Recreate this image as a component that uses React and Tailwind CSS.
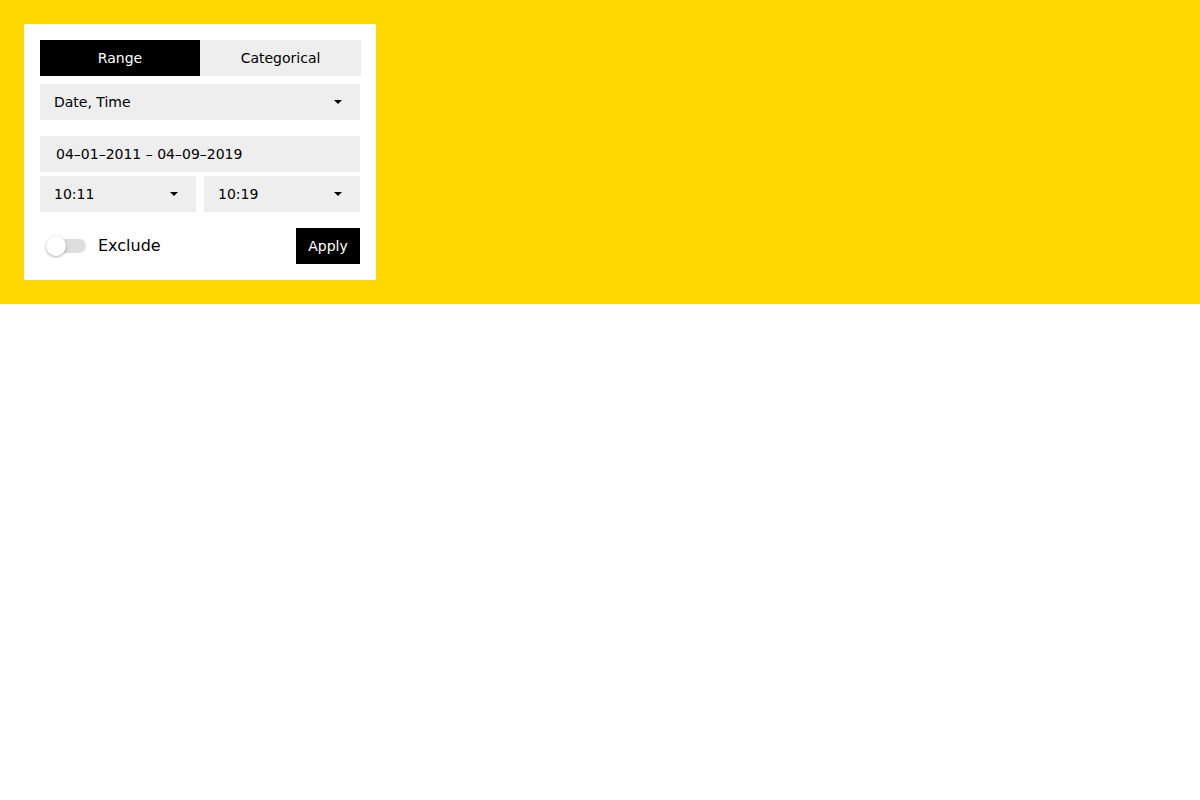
import { useState } from 'react';

const Caret = () => (
  <span className="inline-block w-0 h-0 border-x-[4px] border-x-transparent border-t-[4px] border-t-black" />
);

const Select = ({ value, className = '' }) => (
  <div className={`flex items-center justify-between h-9 pl-[14px] pr-[18px] bg-[#eeeeee] text-sm text-black ${className}`}>
    <span>{value}</span>
    <Caret />
  </div>
);

export default function App() {
  const [tab, setTab] = useState('range');
  const [exclude, setExclude] = useState(false);

  return (
    <div className="min-h-[800px] bg-white font-['DejaVu_Sans',sans-serif]">
      <div className="bg-[#ffd700] p-6">
        <div className="w-[352px] bg-white p-4 flex flex-col">
          <div className="flex h-9 text-sm">
            <button
              onClick={() => setTab('range')}
              className={`w-[160px] shrink-0 flex items-center justify-center ${tab === 'range' ? 'bg-black text-white' : 'bg-[#eeeeee] text-black'}`}
            >
              Range
            </button>
            <button
              onClick={() => setTab('categorical')}
              className={`w-[161px] shrink-0 flex items-center justify-center ${tab === 'categorical' ? 'bg-black text-white' : 'bg-[#eeeeee] text-black'}`}
            >
              Categorical
            </button>
          </div>

          <Select value="Date, Time" className="mt-2" />

          <div className="mt-4 h-9 flex items-center px-4 bg-[#eeeeee] text-sm text-black">
            04–01–2011 – 04–09–2019
          </div>

          <div className="mt-1 flex gap-2">
            <Select value="10:11" className="flex-1" />
            <Select value="10:19" className="flex-1" />
          </div>

          <div className="mt-4 flex items-center justify-between">
            <div className="flex items-center">
              <button
                onClick={() => setExclude(!exclude)}
                className="relative ml-[6px] w-10 h-[14px] rounded-full bg-[#dedede]"
              >
                <span
                  className={`absolute top-[-3px] w-5 h-5 rounded-full bg-white shadow-[0_1px_3px_rgba(0,0,0,0.35)] ${exclude ? 'left-5' : 'left-0'}`}
                />
              </button>
              <span className="ml-3 text-base text-black">Exclude</span>
            </div>
            <button className="w-16 h-9 bg-black text-white text-sm">Apply</button>
          </div>
        </div>
      </div>
    </div>
  );
}
